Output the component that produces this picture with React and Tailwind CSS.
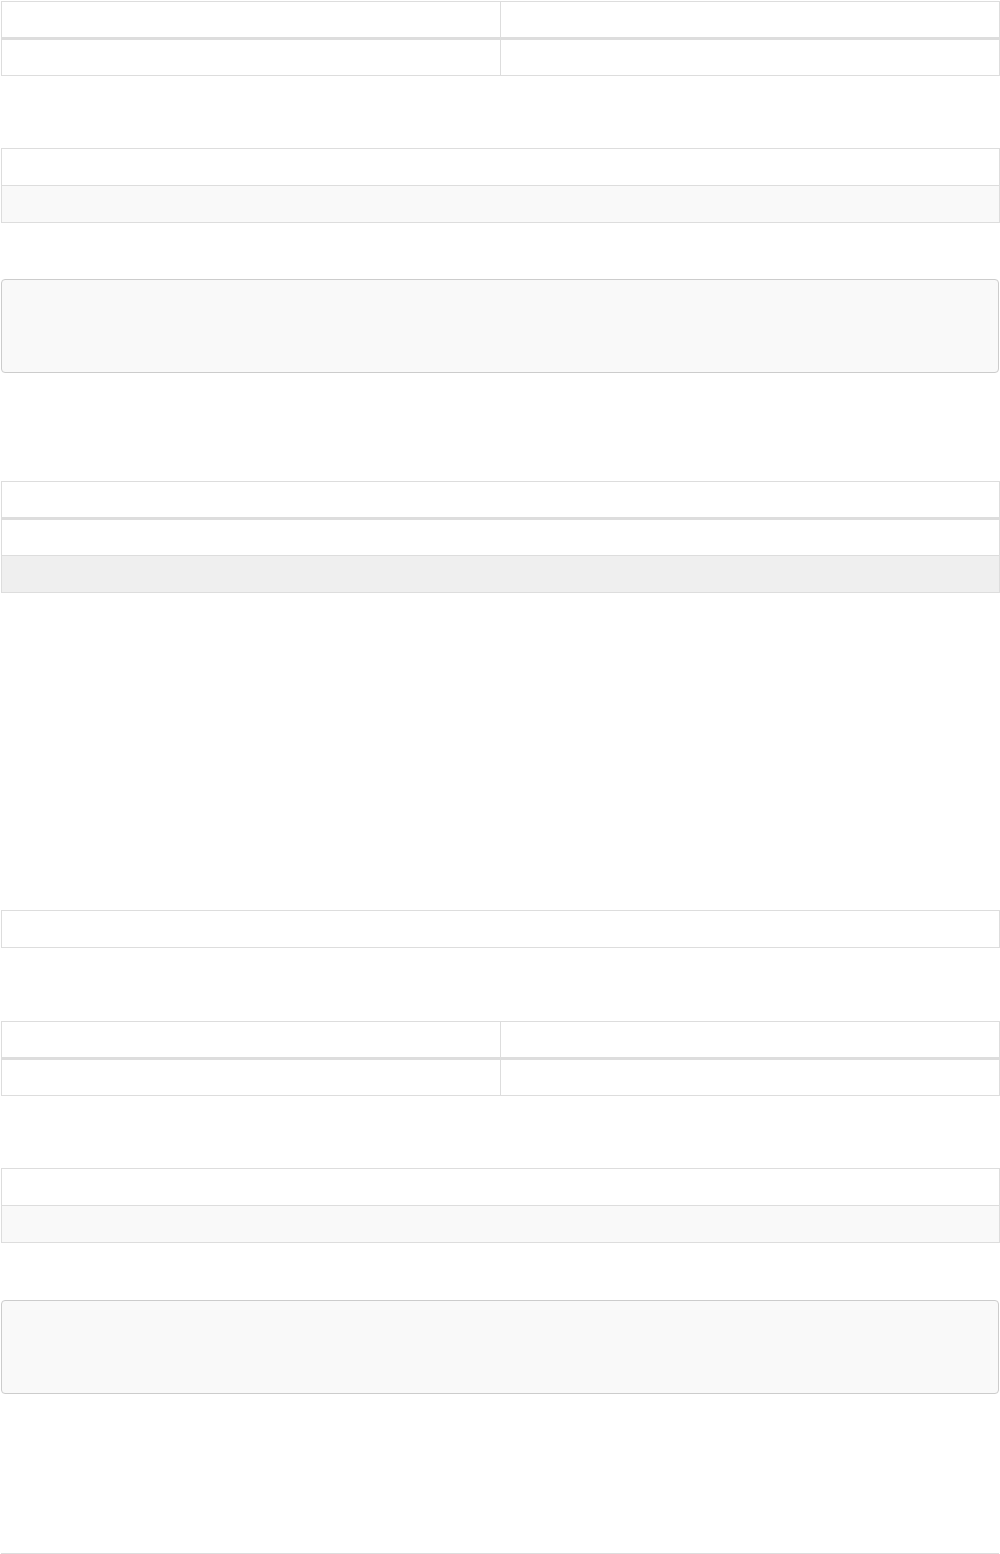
import React from "react";

function TwoColTable({ className = "" }) {
  return (
    <div className={`w-[999px] border border-[#dddddd] ${className}`}>
      <div className="flex h-[38px] border-b-[3px] border-[#dddddd]">
        <div className="w-[499px] border-r border-[#dddddd]"></div>
        <div className="flex-1"></div>
      </div>
      <div className="flex h-[35px]">
        <div className="w-[499px] border-r border-[#dddddd]"></div>
        <div className="flex-1"></div>
      </div>
    </div>
  );
}

function StripedTable({ className = "" }) {
  return (
    <div className={`w-[999px] border border-[#dddddd] ${className}`}>
      <div className="h-[37px] border-b border-[#dddddd] bg-white"></div>
      <div className="h-[36px] bg-[#f9f9f9]"></div>
    </div>
  );
}

function PreBox({ className = "" }) {
  return (
    <div className={`h-[94px] w-[998px] rounded-[4px] border border-[#cccccc] bg-[#f9f9f9] ${className}`}></div>
  );
}

export default function App() {
  return (
    <div className="w-[1000px] min-h-[1554px] bg-white pl-px pt-px font-['Liberation_Sans',sans-serif] text-sm text-[#333]">
      <TwoColTable />
      <StripedTable className="mt-[72px]" />
      <PreBox className="mt-[56px]" />

      <div className="mt-[108px] w-[999px] border border-[#dddddd]">
        <div className="h-[38px] border-b-[3px] border-[#dddddd]"></div>
        <div className="h-[36px] border-b border-[#dddddd]"></div>
        <div className="h-[36px] bg-[#efefef]"></div>
      </div>

      <div className="mt-[317px] w-[999px] border border-[#dddddd]">
        <div className="h-[36px]"></div>
      </div>

      <TwoColTable className="mt-[73px]" />
      <StripedTable className="mt-[72px]" />
      <PreBox className="mt-[57px]" />

      <div className="mt-[159px] h-px w-[998px] bg-[#dddddd]"></div>
    </div>
  );
}
